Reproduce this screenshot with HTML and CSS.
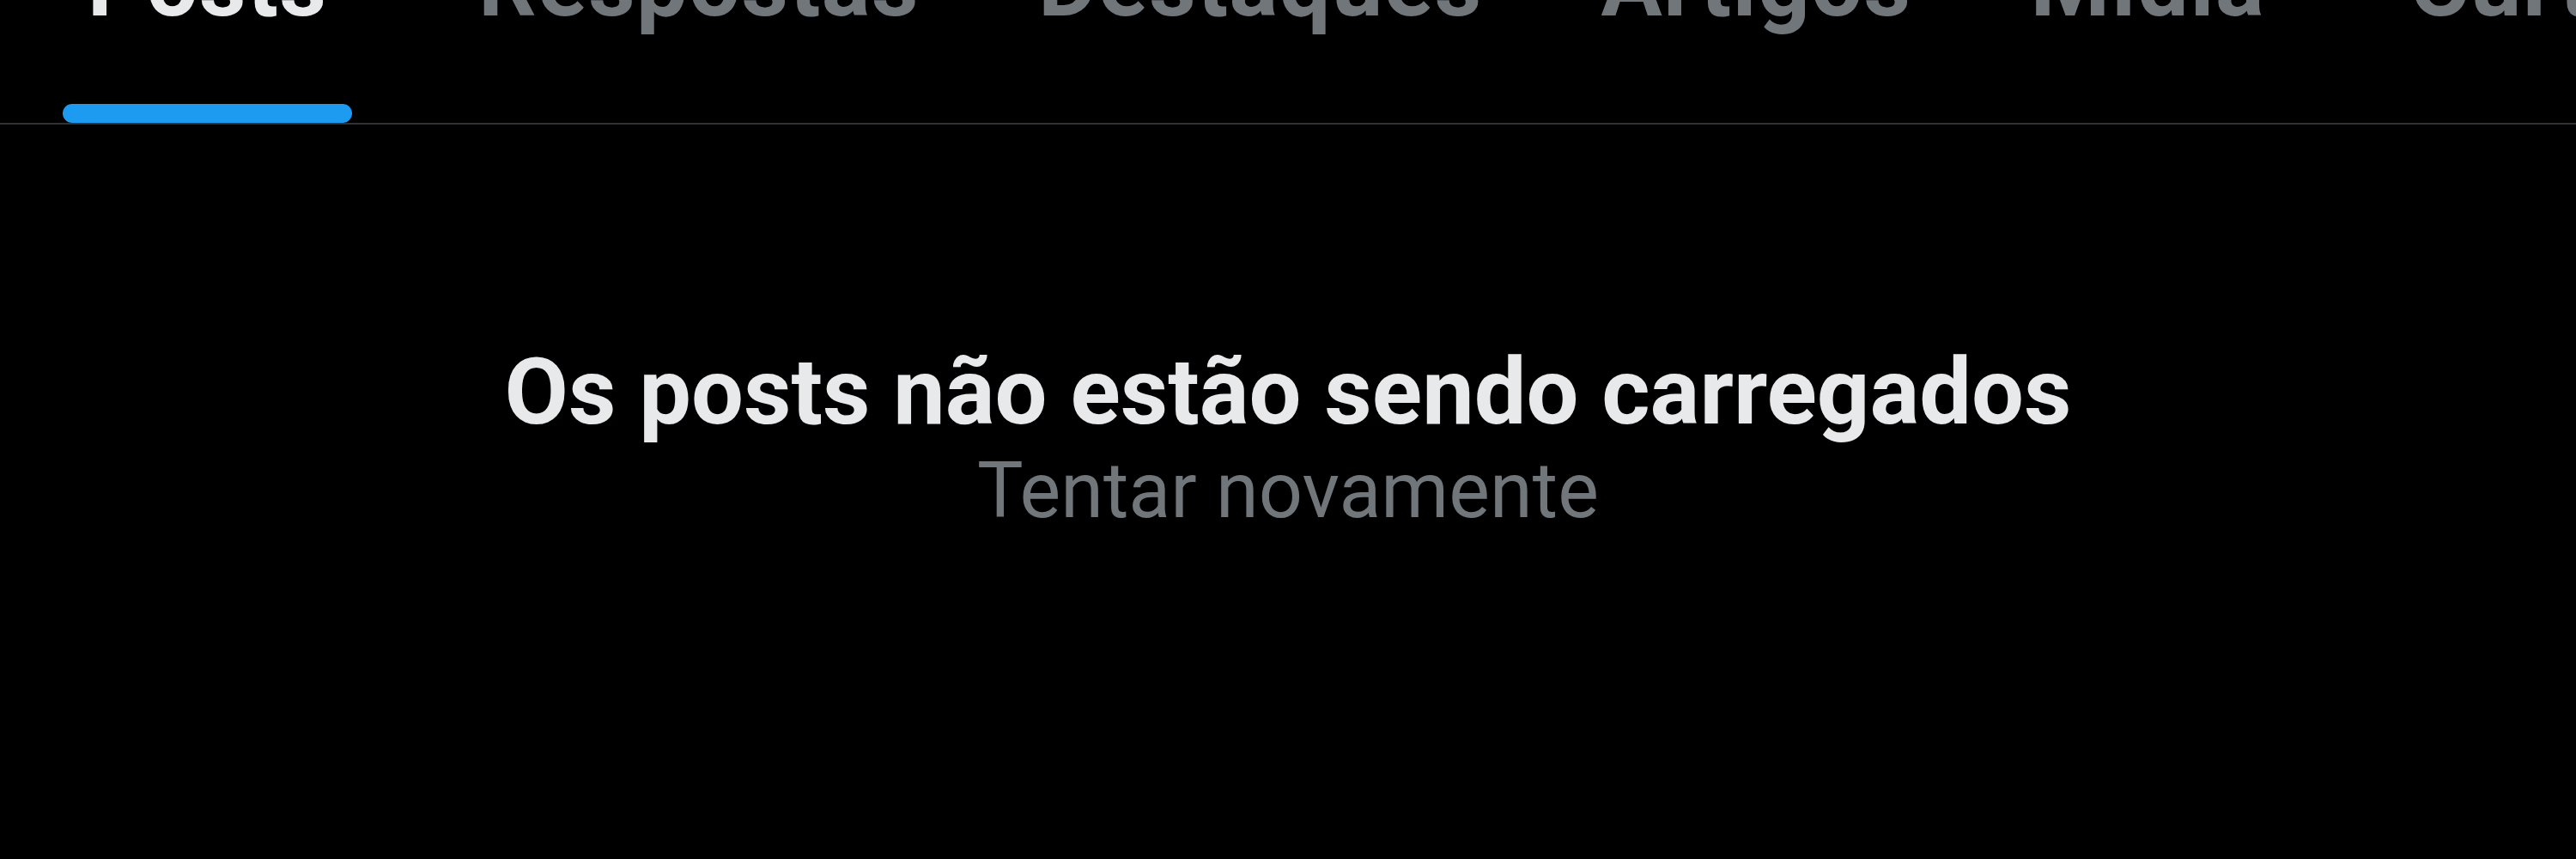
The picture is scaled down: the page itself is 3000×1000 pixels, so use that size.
FILE: index.html
```html
<!DOCTYPE html>
<html lang="pt-BR">
<head>
<meta charset="utf-8">
<title>Posts</title>
<link rel="stylesheet" href="styles.css">
</head>
<body>
<nav class="tabbar">
  <div class="tab tab-first tab-active">
    <div class="tab-inner">
      <span class="tab-label">Posts</span>
      <span class="tab-indicator"></span>
    </div>
  </div>
  <div class="tab"><div class="tab-inner"><span class="tab-label">Respostas</span></div></div>
  <div class="tab"><div class="tab-inner"><span class="tab-label">Destaques</span></div></div>
  <div class="tab"><div class="tab-inner"><span class="tab-label">Artigos</span></div></div>
  <div class="tab"><div class="tab-inner"><span class="tab-label">Mídia</span></div></div>
  <div class="tab tab-last"><div class="tab-inner"><span class="tab-label">Curtidas</span></div></div>
</nav>
<main class="empty">
  <h1 class="empty-title">Os posts não estão sendo carregados</h1>
  <p class="empty-retry">Tentar novamente</p>
</main>
</body>
</html>
```
FILE: styles.css
```css
html, body {
  margin: 0;
  padding: 0;
  background: #000000;
}
body {
  font-family: Roboto, "Noto Sans", "Liberation Sans", sans-serif;
  color: #e7e9ea;
  overflow: hidden;
  width: 3000px;
  height: 1000px;
}
.tabbar {
  display: flex;
  height: 143px;
  border-bottom: 2px solid #2f3336;
  margin-left: -5px;
  overflow: hidden;
}
.tab {
  flex-shrink: 0;
  display: flex;
  justify-content: center;
  padding: 0 69px;
  box-sizing: border-box;
}
.tab-first {
  min-width: 493px;
}
.tab-last {
  margin-left: 30px;
}
.tab-inner {
  display: flex;
  flex-direction: column;
  justify-content: space-between;
  height: 143px;
}
.tab-label {
  display: block;
  font-size: 106px;
  line-height: 100px;
  letter-spacing: 1.5px;
  font-weight: 700;
  color: #71767b;
  margin-top: -68px;
  white-space: nowrap;
  text-align: center;
}
.tab-active .tab-label {
  color: #e7e9ea;
  padding: 0 29px;
}
.tab-indicator {
  display: block;
  height: 22px;
  border-radius: 11px;
  background: #1d9bf0;
}
.empty {
  padding-top: 248px;
  text-align: center;
}
.empty-title {
  margin: 0;
  font-size: 108px;
  line-height: 126px;
  font-weight: 700;
  color: #e7e9ea;
}
.empty-retry {
  margin: 0;
  font-size: 90px;
  line-height: 106px;
  font-weight: 400;
  color: #71767b;
}
```
